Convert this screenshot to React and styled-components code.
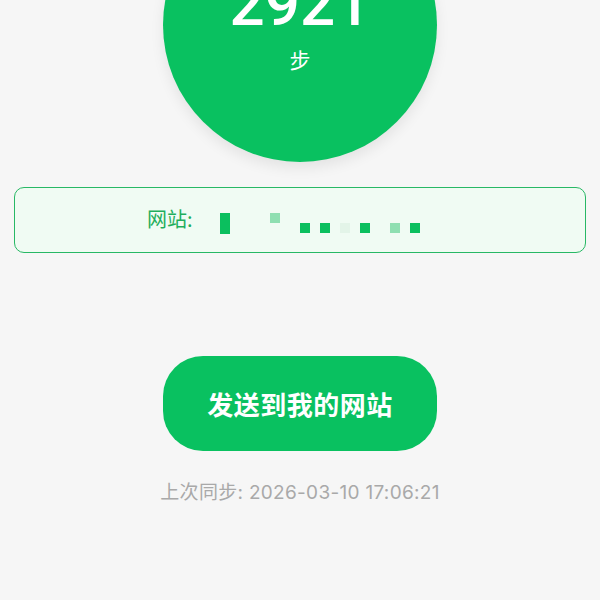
import React from 'react';
import styled, { createGlobalStyle } from 'styled-components';

const GlobalStyle = createGlobalStyle`
  html, body {
    margin: 0;
    padding: 0;
    background: #f6f6f6;
    font-family: "Liberation Sans", "Noto Sans CJK SC", sans-serif;
  }
`;

const Page = styled.div`
  width: 600px;
  height: 600px;
  overflow: hidden;
  background: #f6f6f6;
  display: flex;
  flex-direction: column;
  align-items: center;
`;

const StepCircle = styled.div`
  width: 274px;
  height: 274px;
  margin-top: -112px;
  border-radius: 50%;
  background: #09c160;
  box-shadow: 0 6px 14px rgba(0, 0, 0, 0.08);
  display: flex;
  flex-direction: column;
  align-items: center;
  color: #fff;
  flex-shrink: 0;
`;

const StepCount = styled.div`
  margin-top: 85px;
  font-family: Roboto, "Liberation Sans", sans-serif;
  font-weight: 500;
  font-size: 62px;
  line-height: 62px;
`;

const StepUnit = styled.div`
  margin-top: 12px;
  font-size: 21px;
  line-height: 24px;
  font-family: "Noto Sans CJK SC", sans-serif;
`;

const SiteBox = styled.div`
  box-sizing: border-box;
  width: 572px;
  height: 66px;
  margin-top: 25px;
  border: 1.5px solid #28b865;
  border-radius: 10px;
  background: #f0fbf3;
  display: flex;
  align-items: center;
  padding-left: 132px;
`;

const SiteLabel = styled.span`
  color: #1fae5c;
  font-size: 20px;
  font-family: "Noto Sans CJK SC", sans-serif;
  margin-top: -4px;
`;

const Mosaic = styled.div`
  position: relative;
  width: 210px;
  height: 22px;
  margin-left: 27px;
  margin-top: 8px;
`;

const Pixel = styled.span`
  position: absolute;
  left: ${p => p.x}px;
  top: ${p => p.y}px;
  width: 10px;
  height: ${p => p.h || 10}px;
  background: ${p => p.c};
`;

const SendButton = styled.button`
  margin-top: 103px;
  width: 274px;
  height: 95px;
  border: none;
  border-radius: 40px;
  background: #09c160;
  color: #fff;
  font-family: "Noto Sans CJK SC", sans-serif;
  font-weight: 700;
  font-size: 26px;
  letter-spacing: 0.5px;
  cursor: pointer;
  flex-shrink: 0;
`;

const SyncTime = styled.div`
  margin-top: 26px;
  color: #a9a9a9;
  font-size: 19px;
  letter-spacing: 0.3px;
  font-family: Inter, "Noto Sans CJK SC", sans-serif;
`;

const dark = '#0bbf5e';
const light = '#8fdfb1';
const faint = '#e3f4e8';

const pixels = [
  { x: 0, y: 0, h: 21, c: dark },
  { x: 50, y: 0, c: light },
  { x: 80, y: 10, c: dark },
  { x: 100, y: 10, c: dark },
  { x: 120, y: 10, c: faint },
  { x: 140, y: 10, c: dark },
  { x: 170, y: 10, c: light },
  { x: 190, y: 10, c: dark },
];

export default function App() {
  return (
    <Page>
      <GlobalStyle />
      <StepCircle>
        <StepCount>2921</StepCount>
        <StepUnit>步</StepUnit>
      </StepCircle>
      <SiteBox>
        <SiteLabel>网站:</SiteLabel>
        <Mosaic>
          {pixels.map((p, i) => (
            <Pixel key={i} {...p} />
          ))}
        </Mosaic>
      </SiteBox>
      <SendButton>发送到我的网站</SendButton>
      <SyncTime>上次同步: 2026-03-10 17:06:21</SyncTime>
    </Page>
  );
}
